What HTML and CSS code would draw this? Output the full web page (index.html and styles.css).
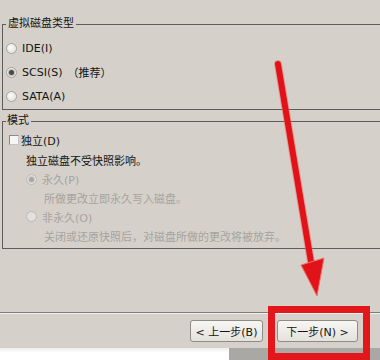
FILE: index.html
```html
<!DOCTYPE html>
<html lang="zh-CN">
<head>
<meta charset="utf-8">
<title>新建虚拟机向导</title>
<link rel="stylesheet" href="styles.css">
</head>
<body>
<div class="dialog">
  <fieldset class="group g1">
    <legend>虚拟磁盘类型</legend>
    <div class="row r24"><span class="radio"></span><span class="lbl">IDE(I)</span></div>
    <div class="row r24"><span class="radio on"></span><span class="lbl">SCSI(S)</span><span class="rec">（推荐）</span></div>
    <div class="row r24"><span class="radio"></span><span class="lbl">SATA(A)</span></div>
  </fieldset>
  <fieldset class="group g2">
    <legend>模式</legend>
    <div class="row h20"><span class="check"></span><span class="lbl cb">独立(D)</span></div>
    <div class="row h19 ind1">独立磁盘不受快照影响。</div>
    <div class="row h20 ind1 dis"><span class="radio on"></span><span class="lbl">永久(P)</span></div>
    <div class="row h18 ind2 dis">所做更改立即永久写入磁盘。</div>
    <div class="row h19 ind1 dis"><span class="radio"></span><span class="lbl">非永久(O)</span></div>
    <div class="row h20 ind2 dis">关闭或还原快照后，对磁盘所做的更改将被放弃。</div>
  </fieldset>
  <div class="fill"></div>
  <div class="sep"></div>
  <div class="buttons">
    <button class="btn back">&lt; 上一步(B)</button>
    <button class="btn next">下一步(N) &gt;</button>
  </div>
</div>
<div class="below">
  <div class="below-left"></div>
  <div class="below-right"></div>
</div>
<div class="highlight"></div>
<svg class="arrow" width="380" height="360" viewBox="0 0 380 360">
  <line x1="278" y1="64" x2="311" y2="262" stroke="#f07070" stroke-width="8" stroke-linecap="round" opacity="0.5"/>
  <line x1="278" y1="64" x2="311" y2="262" stroke="#e01418" stroke-width="6" stroke-linecap="round"/>
  <polygon points="301,265 324,258 317,296" fill="#e01418" stroke="#f07070" stroke-width="1"/>
</svg>
</body>
</html>
```
FILE: styles.css
```css
html, body {
  margin: 0;
  padding: 0;
}
body {
  width: 380px;
  height: 360px;
  overflow: hidden;
  background: #d5d1ca;
  font-family: "DejaVu Sans", "Noto Sans CJK SC", sans-serif;
  font-size: 11px;
  color: #141414;
  position: relative;
}
.dialog {
  height: 348px;
  display: flex;
  flex-direction: column;
  padding: 17px 0 0 2px;
  box-sizing: border-box;
}
.group {
  margin: 0;
  border: 1px solid #5e5c58;
  border-right: none;
  padding: 0 0 2px 3px;
  min-width: 0;
}
.group legend {
  line-height: 14px;
  height: 14px;
  padding: 0 2px;
  color: #141414;
}
.g1 {
  padding-top: 5px;
  padding-bottom: 1px;
}
.g2 {
  margin-top: 4px;
  padding-top: 2px;
}
.g2 legend {
  padding: 0 2px 0 1px;
}
.row {
  display: flex;
  align-items: center;
  white-space: nowrap;
}
.r24 { height: 24px; }
.h20 { height: 20px; }
.h19 { height: 19px; }
.h18 { height: 18px; }
.ind1 { padding-left: 20px; }
.ind2 { padding-left: 38px; }
.radio {
  width: 11px;
  height: 11px;
  box-sizing: border-box;
  border-radius: 50%;
  border: 1px solid #a5a39f;
  background: radial-gradient(circle at 40% 40%, #fbfbfa 0%, #e6e4e0 70%, #d2d0cc 100%);
  display: flex;
  align-items: center;
  justify-content: center;
  margin-right: 5px;
  flex: none;
}
.radio.on::after {
  content: "";
  width: 5px;
  height: 5px;
  border-radius: 50%;
  background: #4a4a4a;
  box-shadow: 0 0 0 1px #bdbbb7;
}
.dis .radio {
  border-color: #bbb9b5;
  background: #e3e1dd;
}
.dis .radio.on::after {
  background: #a9a7a3;
  box-shadow: 0 0 0 1px #d0cec9;
}
.dis {
  color: #a6a39e;
}
.rec {
  margin-left: 5px;
}
.check {
  width: 10px;
  height: 10px;
  box-sizing: border-box;
  border: 1px solid #8c8a86;
  border-right-color: #c8c6c2;
  border-bottom-color: #c8c6c2;
  background: #f6f6f5;
  margin-left: 3px;
  margin-right: 2px;
  flex: none;
}
.fill {
  flex: 1;
}
.sep {
  height: 1px;
  background: #7e7c78;
  border-bottom: 1px solid #f2f1ee;
  margin-left: -2px;
}
.buttons {
  height: 34px;
  display: flex;
  align-items: center;
  justify-content: flex-end;
  gap: 14px;
  padding-right: 22px;
}
.btn {
  height: 22px;
  font: inherit;
  color: #141414;
  border: 1px solid #8e8c88;
  border-radius: 3px;
  background: linear-gradient(#f7f6f3, #e4e2dd);
  padding: 0;
}
.back { width: 73px; }
.next { width: 81px; }
.below {
  height: 12px;
  display: flex;
}
.below-left {
  width: 229px;
  background: linear-gradient(#eeeeec, #ffffff 40%);
}
.below-right {
  flex: 1;
  background: #aaa8a4;
}
.highlight {
  position: absolute;
  left: 268px;
  top: 306px;
  width: 102px;
  height: 54px;
  box-sizing: border-box;
  border: 7px solid #e2161b;
}
.arrow {
  position: absolute;
  left: 0;
  top: 0;
  pointer-events: none;
}
```
